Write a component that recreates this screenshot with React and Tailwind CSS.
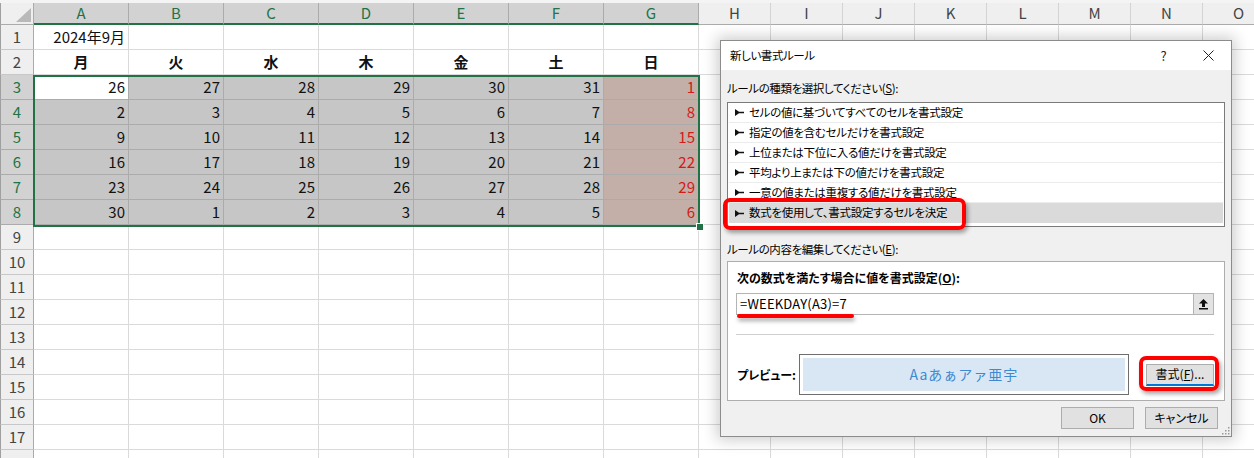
import React from "react";

const F = "font-['Noto_Sans_CJK_JP','Noto_Sans',sans-serif]";
const letters = "ABCDEFGHIJKLMNO".split("");
const days = ["月", "火", "水", "木", "金", "土", "日"];
const weeks = [
  [26, 27, 28, 29, 30, 31, 1],
  [2, 3, 4, 5, 6, 7, 8],
  [9, 10, 11, 12, 13, 14, 15],
  [16, 17, 18, 19, 20, 21, 22],
  [23, 24, 25, 26, 27, 28, 29],
  [30, 1, 2, 3, 4, 5, 6],
];
const rules = [
  "セルの値に基づいてすべてのセルを書式設定",
  "指定の値を含むセルだけを書式設定",
  "上位または下位に入る値だけを書式設定",
  "平均より上または下の値だけを書式設定",
  "一意の値または重複する値だけを書式設定",
  "数式を使用して、書式設定するセルを決定",
];

function Arrow() {
  return (
    <svg width="9" height="7" viewBox="0 0 9 7" className="shrink-0">
      <path d="M0 0 L4 2.8 L9 2.8 L9 4.2 L4 4.2 L0 7 Z" fill="#111" />
    </svg>
  );
}

function Cell({ r, c }) {
  const inSel = r >= 3 && r <= 8 && c < 7;
  let cls = "h-[25px] flex items-center px-[3px] text-[15px] border-r border-b ";
  let content = null;
  if (inSel) {
    const v = weeks[r - 3][c];
    content = v;
    if (r === 3 && c === 0) cls += "bg-white border-[#ababab] justify-end text-[#111]";
    else if (c === 6) cls += "bg-[#c3afa7] border-[#ababab] justify-end text-[#d41a1a]";
    else cls += "bg-[#c6c6c6] border-[#ababab] justify-end text-[#111]";
  } else {
    cls += "bg-white border-[#dadada] text-[#111] ";
    if (r === 1 && c === 0) {
      cls += "justify-end";
      content = "2024年9月";
    } else if (r === 2 && c < 7) {
      cls += "justify-center font-bold";
      content = days[c];
    }
  }
  return <div className={cls}>{content}</div>;
}

function Sheet() {
  const rows = Array.from({ length: 18 }, (_, i) => i + 1);
  return (
    <div className={"flex flex-col " + F}>
      <div className="h-[3px] bg-[#f4f4f4]" />
      <div className="grid grid-cols-[34px_repeat(7,95px)_repeat(8,72px)]">
        <div className="h-[22px] bg-[#efefef] border-r border-b border-[#ababab] border-l border-l-[#a0a0a0] relative">
          <svg width="34" height="22" viewBox="0 0 34 22" className="absolute left-0 top-0">
            <path d="M30 5 L30 19 L15 19 Z" fill="#b9b9b9" />
          </svg>
        </div>
        {letters.map((l, i) =>
          i < 7 ? (
            <div
              key={l}
              className="h-[22px] flex items-center justify-center bg-[#d2d2d2] text-[#217346] text-[15px] border-r border-r-[#ababab] border-b-2 border-b-[#217346]"
            >
              {l}
            </div>
          ) : (
            <div
              key={l}
              className="h-[22px] flex items-center justify-center bg-[#efefef] text-[#444] text-[15px] border-r border-r-[#d4d4d4] border-b border-b-[#ababab]"
            >
              {l}
            </div>
          )
        )}
        {rows.map((r) => (
          <React.Fragment key={r}>
            {r >= 3 && r <= 8 ? (
              <div className="h-[25px] flex items-center justify-center bg-[#d2d2d2] text-[#217346] text-[15px] border-b border-b-[#ababab] border-r border-r-[#ababab] border-l border-l-[#a0a0a0]">
                {r}
              </div>
            ) : (
              <div className="h-[25px] flex items-center justify-center bg-[#efefef] text-[#444] text-[15px] border-b border-b-[#c8c8c8] border-r border-r-[#ababab] border-l border-l-[#a0a0a0]">
                {r < 18 ? r : null}
              </div>
            )}
            {letters.map((l, c) => (
              <Cell key={l} r={r} c={c} />
            ))}
          </React.Fragment>
        ))}
      </div>
    </div>
  );
}

function Btn({ children, className = "" }) {
  return (
    <div
      className={
        "h-[22px] flex items-center justify-center bg-[#e1e1e1] border border-[#adadad] text-[12px] text-black " +
        className
      }
    >
      {children}
    </div>
  );
}

function Dialog() {
  return (
    <div
      className={
        "absolute left-[720px] top-[40px] w-[512px] h-[397px] border border-[#8c8c8c] bg-[#f0f0f0] flex flex-col shadow-[0_0_14px_3px_rgba(0,0,0,0.2)] [font-feature-settings:'palt'] text-black " +
        F
      }
    >
      <div className="h-[29px] bg-white flex items-center pl-[9px] shrink-0">
        <span className="text-[11.5px] tracking-[-0.4px]">新しい書式ルール</span>
        <div className="ml-auto flex">
          <div className="w-[45px] flex items-center justify-center text-[13px] text-[#222]">?</div>
          <div className="w-[45px] flex items-center justify-center">
            <svg width="11" height="11" viewBox="0 0 11 11">
              <path d="M0.5 0.5 L10.5 10.5 M10.5 0.5 L0.5 10.5" stroke="#222" strokeWidth="1" />
            </svg>
          </div>
        </div>
      </div>
      <div className="flex flex-col px-[6px]">
        <div className="mt-[10px] h-[16px] leading-[16px] text-[11.5px] tracking-[-0.4px]">
          ルールの種類を選択してください(<span className="underline">S</span>):
        </div>
        <div className="mt-[6px] h-[125px] border border-[#7a7a7a] bg-white flex flex-col">
          {rules.map((t, i) => (
            <div
              key={i}
              className={
                i === 5
                  ? "h-[20px] mx-[1px] flex items-center gap-[5px] pl-[6px] bg-[#dadada] text-[11.5px] tracking-[-0.3px]"
                  : "h-[20px] mx-[1px] flex items-center gap-[5px] pl-[6px] border-b border-[#ececec] text-[11.5px] tracking-[-0.3px]"
              }
            >
              <Arrow />
              <span>{t}</span>
            </div>
          ))}
        </div>
        <div className="mt-[14px] h-[16px] leading-[16px] text-[11.5px] tracking-[-0.4px]">
          ルールの内容を編集してください(<span className="underline">E</span>):
        </div>
        <div className="mt-[4px] h-[140px] border border-[#adadad] bg-white flex flex-col pl-[8px] pr-[10px]">
          <div className="mt-[8px] h-[16px] leading-[16px] text-[12px] font-bold pl-[1px]">
            次の数式を満たす場合に値を書式設定(<span className="underline">O</span>):
          </div>
          <div className="mt-[7px] h-[22px] border border-[#b4b4b4] flex items-center">
            <span className="pl-[3px] text-[13px] [font-feature-settings:normal] tracking-[0.2px]">=WEEKDAY(A3)=7</span>
            <div className="ml-auto h-full w-[20px] bg-[#e3e3e3] border-l border-[#b4b4b4] flex items-center justify-center">
              <svg width="11" height="12" viewBox="0 0 11 12">
                <path d="M5.5 1 L10 5.5 L7 5.5 L7 9 L4 9 L4 5.5 L1 5.5 Z" fill="#111" />
                <rect x="1" y="10" width="9" height="1.5" fill="#111" />
              </svg>
            </div>
          </div>
          <div className="mt-[19px] h-[1px] bg-[#cfcfcf]" />
          <div className="mt-[19px] flex items-center">
            <span className="text-[12px] font-bold w-[63px] pl-[1px]">プレビュー:</span>
            <div className="w-[330px] h-[41px] border border-[#6e6e6e] bg-white p-[3px]">
              <div className="w-full h-full bg-[#d9e7f5] flex items-center justify-center text-[14px] text-[#3d8ad2] tracking-[1px] [font-feature-settings:normal]">
                Aaあぁアァ亜宇
              </div>
            </div>
            <div className="ml-auto h-[22px] w-[68px] flex items-center justify-center bg-[#e1e1e1] border border-[#adadad] border-b-2 border-b-[#0078d7] text-[12px]">
              書式(<span className="underline">F</span>)...
            </div>
          </div>
        </div>
        <div className="mt-[6px] flex justify-end gap-[11px] pr-[7px]">
          <Btn className="w-[73px]">OK</Btn>
          <Btn className="w-[73px]">キャンセル</Btn>
        </div>
      </div>
      <svg width="9" height="9" viewBox="0 0 9 9" className="absolute right-[1px] bottom-[1px]">
        <rect x="7" y="1" width="1.5" height="1.5" fill="#9a9a9a" />
        <rect x="4" y="4" width="1.5" height="1.5" fill="#9a9a9a" />
        <rect x="7" y="4" width="1.5" height="1.5" fill="#9a9a9a" />
        <rect x="1" y="7" width="1.5" height="1.5" fill="#9a9a9a" />
        <rect x="4" y="7" width="1.5" height="1.5" fill="#9a9a9a" />
        <rect x="7" y="7" width="1.5" height="1.5" fill="#9a9a9a" />
      </svg>
    </div>
  );
}

export default function App() {
  return (
    <div className="w-[1254px] h-[458px] relative overflow-hidden bg-white">
      <Sheet />
      {/* selection border */}
      <div className="absolute left-[33px] top-[75px] w-[667px] h-[152px] border-2 border-[#217346] pointer-events-none" />
      <div className="absolute left-[696px] top-[223px] w-[8px] h-[8px] bg-[#217346] border border-white" />
      <Dialog />
      {/* red highlights */}
      <div className="absolute left-[723px] top-[198px] w-[243px] h-[32px] border-[4px] border-[#ff0000] rounded-[7px] shadow-[2px_3px_4px_rgba(0,0,0,0.35)]" />
      <div className="absolute left-[737px] top-[314px] w-[117px] h-[4px] bg-[#ff0000] rounded-[2px] shadow-[1px_3px_4px_rgba(0,0,0,0.35)]" />
      <div className="absolute left-[1139px] top-[356px] w-[80px] h-[35px] border-[4px] border-[#ff0000] rounded-[7px] shadow-[2px_3px_4px_rgba(0,0,0,0.35)]" />
    </div>
  );
}
